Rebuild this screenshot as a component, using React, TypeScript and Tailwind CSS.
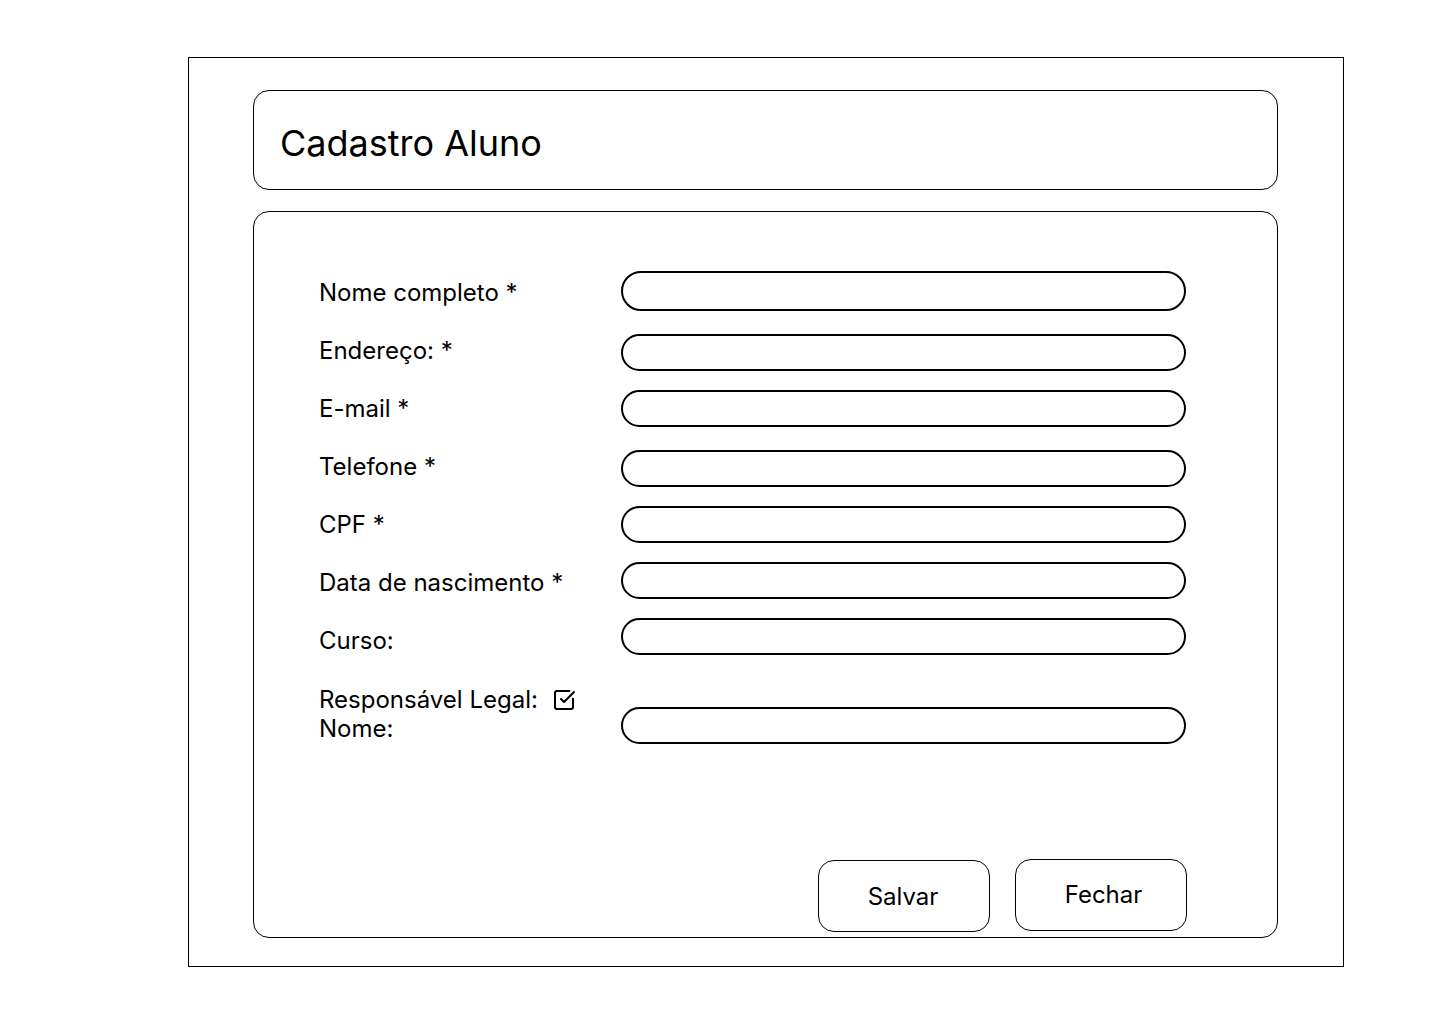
import { SquareCheckBig } from "lucide-react";

const labels = [
  "Nome completo *",
  "Endereço: *",
  "E-mail *",
  "Telefone *",
  "CPF *",
  "Data de nascimento *",
  "Curso:",
];

// gaps between inputs in the mockup are not uniform
const inputs = [
  "mt-0 h-[40px]",
  "mt-[23px] h-[37px]",
  "mt-[19px] h-[37px]",
  "mt-[23px] h-[37px]",
  "mt-[19px] h-[37px]",
  "mt-[19px] h-[37px]",
  "mt-[19px] h-[37px]",
  "mt-[52px] h-[37px]",
];

export default function App() {
  return (
    <div
      className="min-h-screen w-full bg-white pt-[57px] pl-[188px]"
      style={{ fontFamily: "Inter, 'Noto Sans', sans-serif" }}
    >
      <div className="w-[1156px] h-[910px] border border-black pt-[32px] pl-[64px]">
        <header className="w-[1025px] h-[100px] rounded-2xl border border-black flex items-center pl-[26px] pt-[6px]">
          <h1 className="text-[36px] text-black">Cadastro Aluno</h1>
        </header>

        <main className="mt-[21px] w-[1025px] h-[727px] rounded-2xl border border-black pl-[65px] pb-[5px] flex flex-col">
          <div className="flex">
            <div className="w-[302px] pt-[52px] text-[24px] text-black">
              {labels.map((l) => (
                <div key={l} className="h-[58px] leading-[58px]">
                  {l}
                </div>
              ))}
              <div className="mt-[15px] leading-[29px]">
                <div className="flex items-center">
                  <span>Responsável Legal:</span>
                  <SquareCheckBig className="ml-[14px] size-6" strokeWidth={2} />
                </div>
                <div>Nome:</div>
              </div>
            </div>
            <div className="pt-[59px] flex flex-col">
              {inputs.map((c, i) => (
                <input
                  key={i}
                  type="text"
                  className={`${c} w-[565px] rounded-full border-2 border-black bg-white outline-none`}
                />
              ))}
            </div>
          </div>

          <div className="mt-auto flex items-center gap-[25px] pl-[499px]">
            <button className="w-[172px] h-[72px] rounded-2xl border border-black text-[24px] text-black pt-[2px] pr-[2px]">
              Salvar
            </button>
            <button className="w-[172px] h-[72px] rounded-2xl border border-black text-[24px] text-black -mt-[2px] pl-[5px]">
              Fechar
            </button>
          </div>
        </main>
      </div>
    </div>
  );
}
